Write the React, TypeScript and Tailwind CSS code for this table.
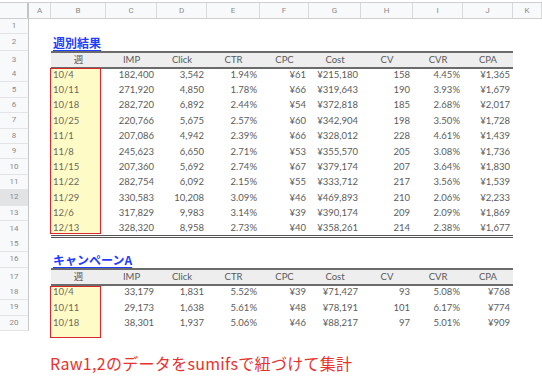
import type { ReactNode } from 'react'

const COLS = 'relative grid grid-cols-[29px_22px_55px_51px_50px_53px_49px_52px_52px_50px_50px_1fr]'

const letters = ['A', 'B', 'C', 'D', 'E', 'F', 'G', 'H', 'I', 'J', 'K']
const heads = ['週', 'IMP', 'Click', 'CTR', 'CPC', 'Cost', 'CV', 'CVR', 'CPA']

const weekly = [
  ['10/4', '182,400', '3,542', '1.94%', '¥61', '¥215,180', '158', '4.45%', '¥1,365'],
  ['10/11', '271,920', '4,850', '1.78%', '¥66', '¥319,643', '190', '3.93%', '¥1,679'],
  ['10/18', '282,720', '6,892', '2.44%', '¥54', '¥372,818', '185', '2.68%', '¥2,017'],
  ['10/25', '220,766', '5,675', '2.57%', '¥60', '¥342,904', '198', '3.50%', '¥1,728'],
  ['11/1', '207,086', '4,942', '2.39%', '¥66', '¥328,012', '228', '4.61%', '¥1,439'],
  ['11/8', '245,623', '6,650', '2.71%', '¥53', '¥355,570', '205', '3.08%', '¥1,736'],
  ['11/15', '207,360', '5,692', '2.74%', '¥67', '¥379,174', '207', '3.64%', '¥1,830'],
  ['11/22', '282,754', '6,092', '2.15%', '¥55', '¥333,712', '217', '3.56%', '¥1,539'],
  ['11/29', '330,583', '10,208', '3.09%', '¥46', '¥469,893', '210', '2.06%', '¥2,233'],
  ['12/6', '317,829', '9,983', '3.14%', '¥39', '¥390,174', '209', '2.09%', '¥1,869'],
  ['12/13', '328,320', '8,958', '2.73%', '¥40', '¥358,261', '214', '2.38%', '¥1,677'],
]

const campaign = [
  ['10/4', '33,179', '1,831', '5.52%', '¥39', '¥71,427', '93', '5.08%', '¥768'],
  ['10/11', '29,173', '1,638', '5.61%', '¥48', '¥78,191', '101', '6.17%', '¥774'],
  ['10/18', '38,301', '1,937', '5.06%', '¥46', '¥88,217', '97', '5.01%', '¥909'],
]

function Row({ n, h, active, children }: { n: number; h: string; active?: boolean; children?: ReactNode }) {
  return (
    <div className={`${COLS} ${h}`}>
      <div
        className={`flex items-center justify-center border-b border-r border-b-[#e4e4e4] border-r-[#c6c6c6] font-['Roboto',sans-serif] text-[8px] text-[#8a8a8a] ${
          active ? 'bg-[#e2e3e5]' : 'bg-[#f8f9fa]'
        }`}
      >
        {n}
      </div>
      {children}
    </div>
  )
}

function Title({ n, h, text }: { n: number; h: string; text: string }) {
  return (
    <Row n={n} h={h}>
      <div />
      <div className="col-span-4 flex items-end pl-[2px] pb-[1px]">
        <span className="font-['Noto_Sans_CJK_JP',sans-serif] text-[12px] leading-[14px] font-bold text-[#1f3dff] underline underline-offset-2">
          {text}
        </span>
      </div>
    </Row>
  )
}

function HeadRow({ n, h }: { n: number; h: string }) {
  return (
    <Row n={n} h={h}>
      <div />
      {heads.map(t => (
        <div
          key={t}
          className="flex items-center justify-center border-y-2 border-[#6b6b6b] bg-[#eeeeee] font-['Lato','Noto_Sans_CJK_JP',sans-serif] text-[9.5px] text-[#5a5a5a]"
        >
          {t}
        </div>
      ))}
    </Row>
  )
}

function DataRow({ n, cells, last, active }: { n: number; cells: string[]; last?: boolean; active?: boolean }) {
  const line = last ? 'border-b-[3px] border-double border-[#555]' : ''
  return (
    <Row n={n} h="h-[15.4px]" active={active}>
      <div />
      <div className={`flex items-center pl-[2px] text-[#6a6a5a] ${line}`}>{cells[0]}</div>
      {cells.slice(1).map((c, i) => (
        <div key={i} className={`flex items-center justify-end pr-[3px] text-[#5c5c5c] ${line}`}>
          {c}
        </div>
      ))}
    </Row>
  )
}

export default function App() {
  return (
    <div className="w-[542px] h-[389px] overflow-hidden bg-white font-['Lato',sans-serif] text-[9.5px]">
      <div className={`${COLS} h-[17px] mt-[2px] border-y border-[#cfcfcf] bg-[#f8f9fa]`}>
        <div className="border-r-2 border-[#c4c4c4]" />
        {letters.map(l => (
          <div
            key={l}
            className="flex items-center justify-center border-r border-[#d9d9d9] font-['Roboto',sans-serif] text-[8px] text-[#8a8a8a]"
          >
            {l}
          </div>
        ))}
      </div>

      <Row n={1} h="h-[15px]" />
      <Title n={2} h="h-[17px]" text="週別結果" />
      <HeadRow n={3} h="h-[16px]" />
      <div className="relative">
        <div className="absolute left-[50px] top-[1px] w-[51px] h-[166px] border border-[#d8282f] bg-[#fffbc7]" />
        {weekly.map((r, i) => (
          <DataRow key={r[0]} n={i + 4} cells={r} last={i === weekly.length - 1} active={i + 4 === 12} />
        ))}
      </div>
      <Row n={15} h="h-[15.6px]" />
      <Title n={16} h="h-[16px]" text="キャンペーンA" />
      <HeadRow n={17} h="h-[17px]" />
      <div className="relative">
        <div className="absolute left-[50px] top-[1px] w-[51px] h-[52px] border border-[#d8282f] bg-[#fffbc7]" />
        {campaign.map((r, i) => (
          <DataRow key={r[0]} n={i + 18} cells={r} />
        ))}
      </div>

      <p className="mt-[22px] pl-[50px] font-['Noto_Sans_CJK_JP',sans-serif] text-[16px] leading-[20px] tracking-[0.3px] text-[#e8322c]">
        Raw1,2のデータをsumifsで紐づけて集計
      </p>
    </div>
  )
}
